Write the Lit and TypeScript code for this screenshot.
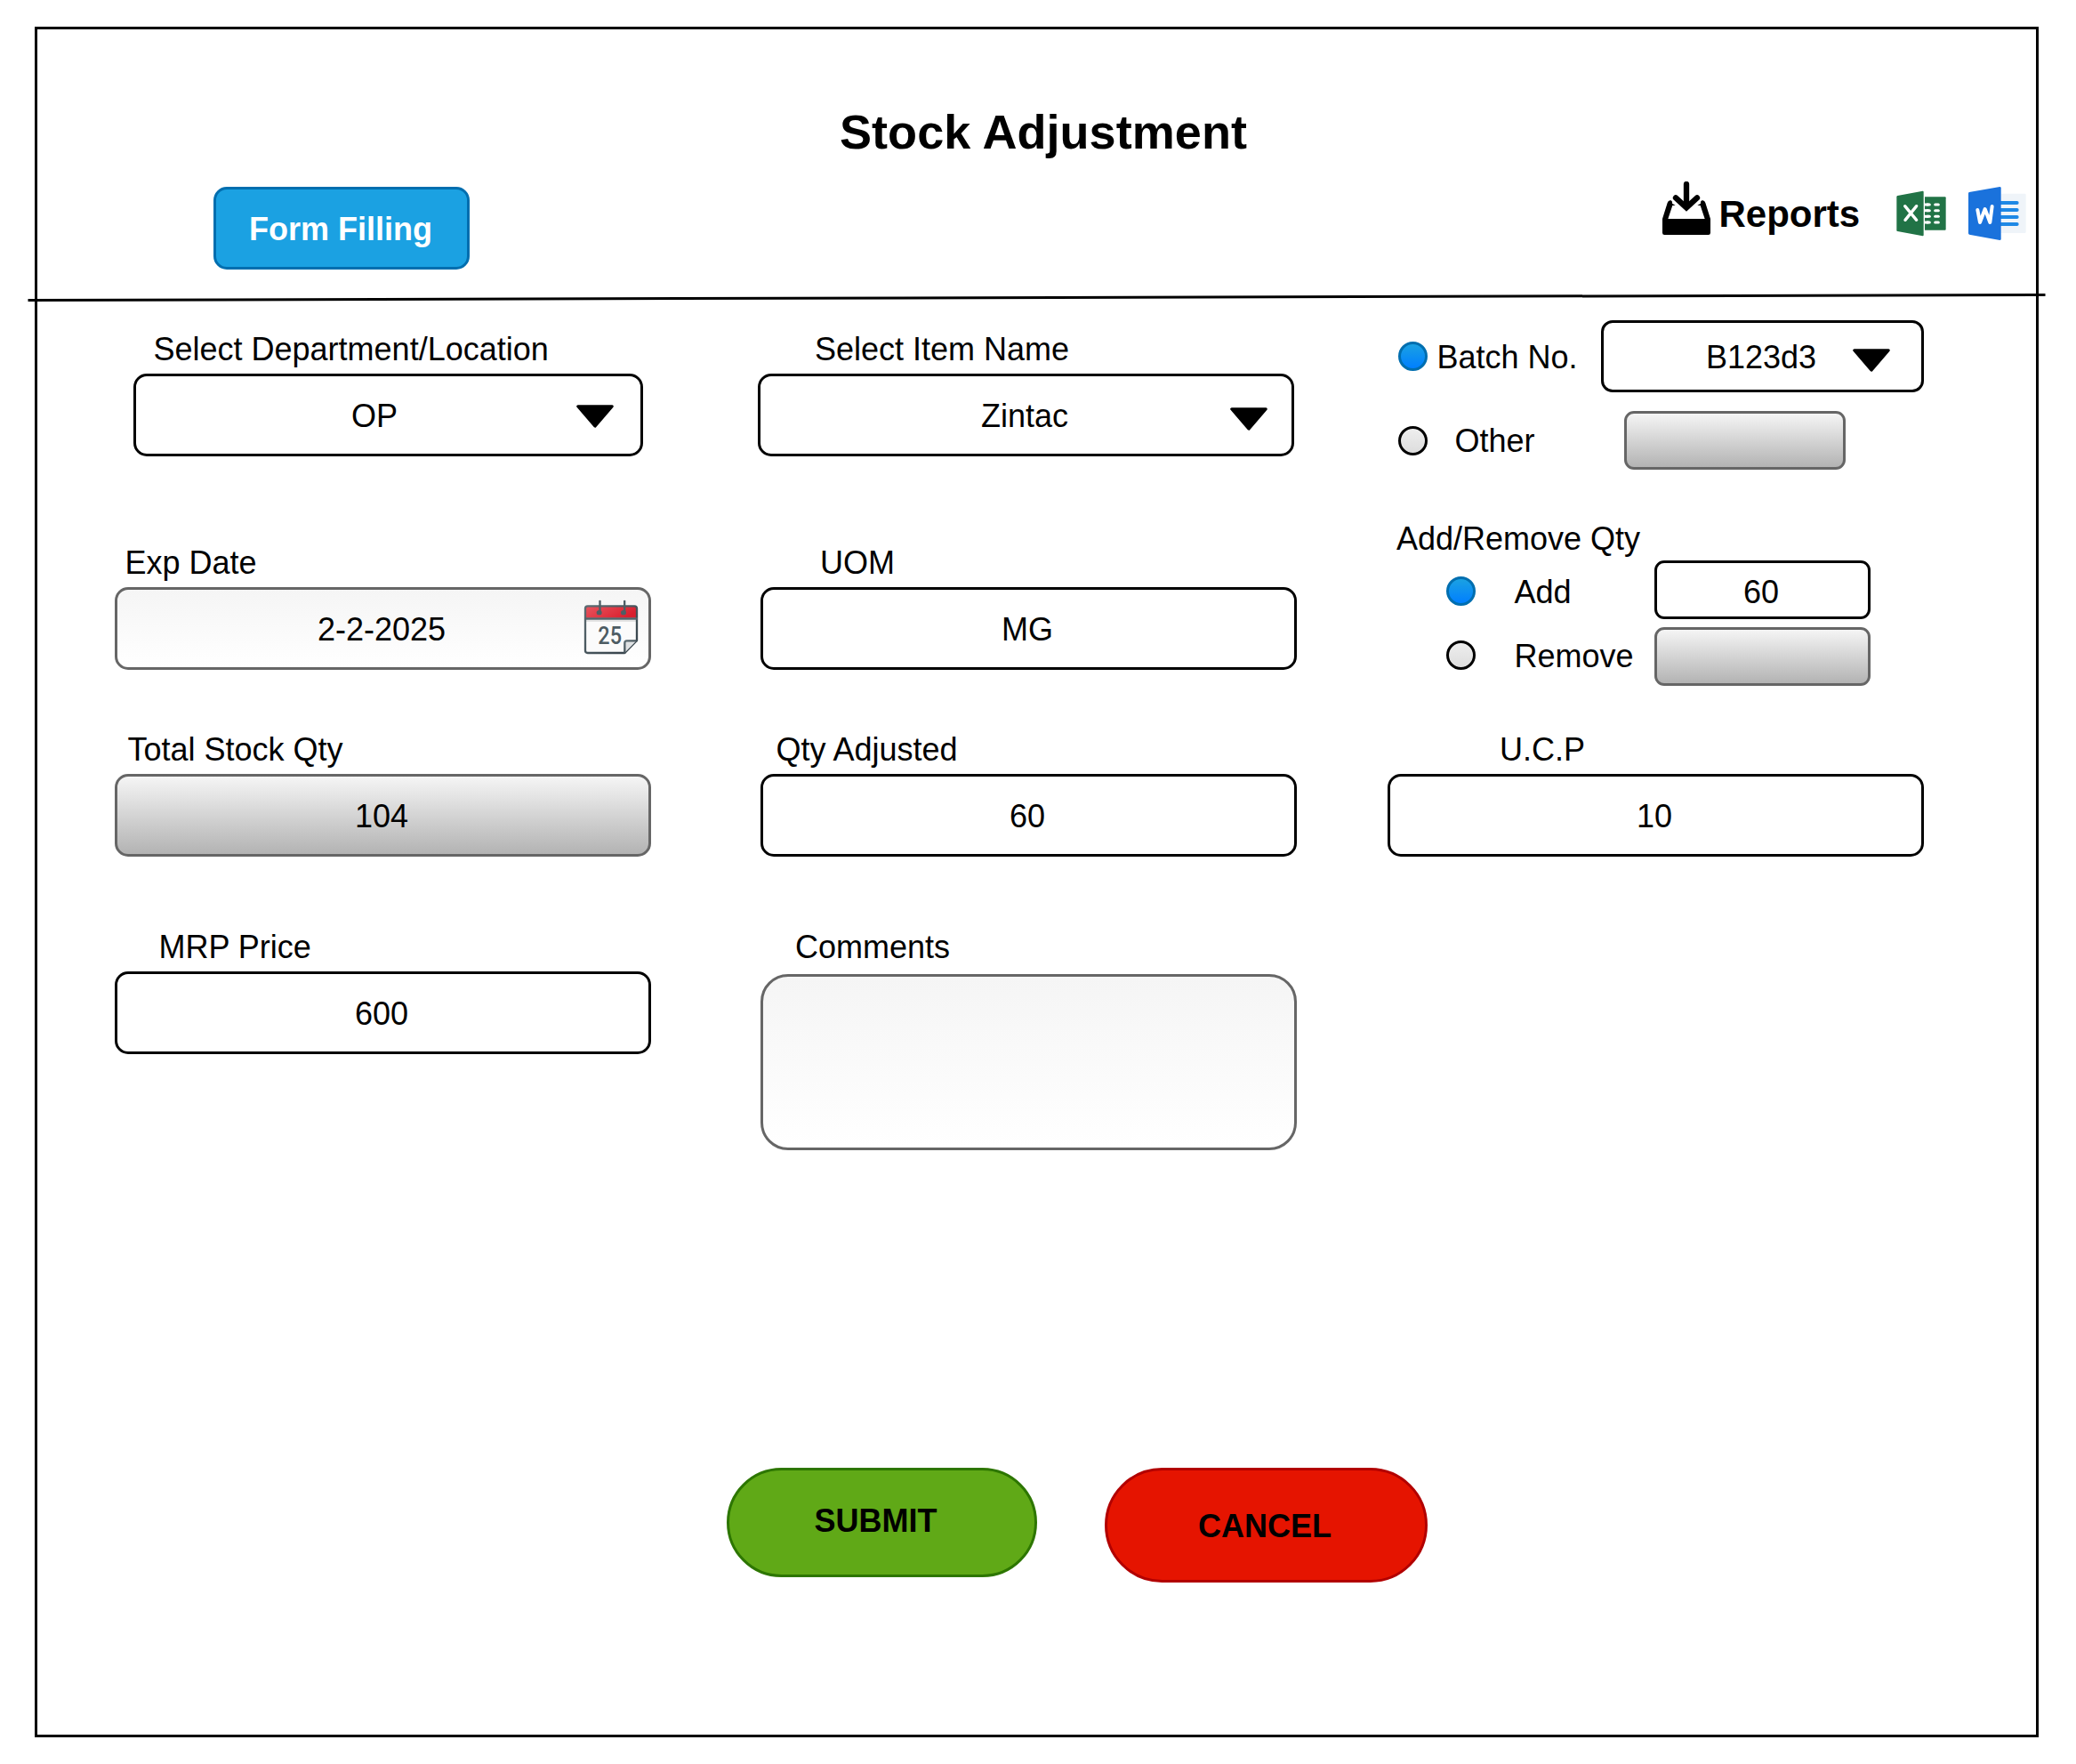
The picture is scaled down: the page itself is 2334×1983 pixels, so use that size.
import { LitElement, html, css, svg, nothing } from "lit";
import { customElement, property } from "lit/decorators.js";

const trayIcon = html`
  <svg class="tray" viewBox="87 72 162 180" width="54" height="60">
    <g fill="none" stroke="#000" stroke-width="19" stroke-linecap="round">
      <path d="M168 81V150" />
      <path d="M132 127L168 160L204 127" stroke-linejoin="miter" />
    </g>
    <path d="M87 198L104 144Q107 134 116 136L120 140V146L131 153H121L106 198H230L215 153H205L216 146V140L220 136Q229 134 232 144L249 198V245Q249 252 242 252H94Q87 252 87 245Z" />
  </svg>
`;

const excelIcon = html`
  <svg class="excel" viewBox="876 102 168 156" width="56" height="52">
    <path fill="#217346" d="M972 124H1040Q1043 124 1043 127V233Q1043 236 1040 236H972Z" />
    <path fill="#217346" d="M880 120L965 104Q968 104 968 107V253Q968 256 965 256L880 240Q877 240 877 237V123Q877 121 880 120Z" />
    <g stroke="#fff" stroke-width="9" fill="none">
      ${[150, 170, 190, 210].map(
        (y) => svg`
          <path d="M972 ${y}H985" /><path d="M980 ${y}H988" stroke-linecap="round" />
          <path d="M1007 ${y}H1018" stroke-linecap="round" />`
      )}
      <path d="M905 155L944 202M944 155L906 202" stroke-width="10" stroke-linecap="round" />
    </g>
  </svg>
`;

const wordIcon = html`
  <svg class="word" viewBox="1119 90 195 180" width="65" height="60">
    <path fill="#eff4f9" d="M1226 113H1309Q1313 113 1313 117V242Q1313 246 1309 246H1226Z" />
    <g stroke="#1e88e5" stroke-width="12" stroke-linecap="round">
      ${[144, 168, 192, 216].map((y) => svg`<path d="M1226 ${y}H1283" />`)}
    </g>
    <path fill="#1a72dc" d="M1122 108L1225 90Q1229 90 1229 94V266Q1229 270 1225 270L1122 251Q1119 250 1119 247V112Q1119 109 1122 108Z" />
    <path fill="none" stroke="#fff" stroke-width="12" stroke-linecap="round" stroke-linejoin="round" d="M1150 168L1158 210L1175 165L1192 210L1199 156" />
  </svg>
`;

const calendarIcon = html`
  <svg class="calendar" viewBox="48 42 186 186" width="62" height="62">
    <defs>
      <linearGradient id="cal-red" x1="0" x2="1" y1="0" y2="0.4">
        <stop offset="0" stop-color="#e8555f" />
        <stop offset="1" stop-color="#d9202f" />
      </linearGradient>
      <linearGradient id="cal-line" x1="0" x2="1" y1="0" y2="1">
        <stop offset="0" stop-color="#5c6c72" />
        <stop offset="1" stop-color="#333f47" />
      </linearGradient>
    </defs>
    <path fill="#fbfbfb" d="M54 64H228V180L187 222H62Q54 222 54 214Z" />
    <path fill="url(#cal-red)" d="M54 72Q54 64 62 64H220Q228 64 228 72V104H54Z" />
    <path fill="#e4e4e4" d="M57 110H225V117H57Z" />
    <g fill="none" stroke="url(#cal-line)" stroke-width="7" stroke-linejoin="round" stroke-linecap="round">
      <path d="M62 64H220Q228 64 228 72V180L187 222H62Q54 222 54 214V72Q54 64 62 64Z" />
      <path d="M187 221V188Q187 181 194 181H227" fill="#dfe2e4" />
    </g>
    <path fill="#53636a" d="M51 103H231V110H51Z" />
    <g fill="#4e5e65">
      <path d="M100 46Q100 44 103.500 44T107 46V82H100Z" />
      <path d="M183 46Q183 44 186.500 44T190 46V82H183Z" />
      <ellipse cx="101" cy="86" rx="9" ry="8" />
      <ellipse cx="183" cy="86" rx="9" ry="8" />
    </g>
    <text x="97" y="192" textLength="80" lengthAdjust="spacingAndGlyphs" class="day">25</text>
  </svg>
`;

const chevron = html`
  <svg class="chevron" viewBox="0 0 42 26" width="42" height="26">
    <path fill="#000" stroke="#000" stroke-width="3" stroke-linejoin="round" d="M1.7 1.8H40.3L21 24.2Z" />
  </svg>
`;

const base = css`
  * {
    box-sizing: border-box;
  }
  svg {
    display: block;
    flex: none;
  }
`;

/** A rounded box that shows a centred value and, if asked, an icon at its right end. */
@customElement("value-box")
class ValueBox extends LitElement {
  @property() value = "";
  @property() icon = "";

  static styles = [
    base,
    css`
      :host {
        box-sizing: border-box;
        display: grid;
        flex: none;
        grid-template-rows: 100%;
        grid-template-columns: 100%;
        align-items: center;
        height: 93px;
        border: 3px solid #000;
        border-radius: 15px;
        background: #fff;
      }
      .value,
      .chevron,
      .calendar {
        grid-area: 1 / 1;
      }
      .value {
        justify-self: center;
        line-height: 41px;
        padding-top: var(--value-top, 2px);
        padding-right: var(--value-right, 3px);
      }
      .chevron {
        justify-self: end;
        align-self: start;
        margin: var(--arrow-top, 32px) var(--arrow-right, 30px) 0 0;
      }
      .calendar {
        justify-self: end;
        align-self: start;
        margin: 11px 11px 0 0;
      }
      .day {
        font: 500 81px Roboto, "Liberation Sans", sans-serif;
        fill: #4d5c63;
      }
    `,
  ];

  render() {
    return html`
      <span class="value">${this.value}</span>
      ${this.icon === "chevron" ? chevron : this.icon === "calendar" ? calendarIcon : nothing}
    `;
  }
}

@customElement("app-root")
class AppRoot extends LitElement {
  static styles = [
    base,
    css`
      :host {
        display: block;
        position: relative;
        width: 2334px;
        height: 1983px;
        padding: 30px 42px 30px 39px;
        box-sizing: border-box;
        background: #fff;
        color: #000;
        font-family: "Liberation Sans", Arial, sans-serif;
        font-size: 36px;
        line-height: 41px;
        white-space: nowrap;
      }
      .frame {
        height: 1923px;
        border: 3px solid #000;
        display: flex;
        flex-direction: column;
      }
      .header {
        height: 327px;
        padding-top: 85px;
      }
      .title {
        margin: 0;
        padding-left: 15px;
        text-align: center;
        font-size: 54px;
        line-height: 61px;
        letter-spacing: 0.06px;
      }
      .toolbar {
        display: flex;
        align-items: flex-start;
        padding: 25px 11px 0 198px;
      }
      .tab {
        width: 288px;
        height: 93px;
        margin-top: 6px;
        padding: 2px 2px 0 0;
        display: flex;
        align-items: center;
        justify-content: center;
        border: 3px solid #006eaf;
        border-radius: 15px;
        background: #1ba1e2;
        color: #fff;
        font-weight: bold;
      }
      .tray {
        margin-left: auto;
      }
      .reports {
        width: 199.5px;
        margin: 13px 0 0 9.5px;
        font-size: 42px;
        line-height: 48px;
        font-weight: bold;
      }
      .excel {
        margin-top: 10px;
      }
      .word {
        margin: 6px 0 0 25px;
      }
      .rule {
        position: absolute;
        left: 0;
        top: 324px;
        pointer-events: none;
      }
      .form {
        height: 1290px;
        display: flex;
        padding-left: 87px;
      }
      .column {
        display: flex;
        flex-direction: column;
        flex: none;
      }
      .first {
        width: 723px;
        padding-top: 12px;
      }
      .second {
        width: 708px;
        padding-top: 12px;
      }
      .third {
        width: 603px;
      }
      .field {
        display: flex;
        flex-direction: column;
        gap: 7px;
        width: 603px;
      }
      .department {
        width: 573px;
        margin-left: 21px;
        --value-right: 31px;
        --arrow-right: 30px;
      }
      .item {
        --arrow-top: 35px;
        --arrow-right: 27px;
      }
      .row2 {
        margin-top: 99px;
      }
      .row3 {
        margin-top: 69px;
      }
      .row4 {
        margin-top: 81px;
      }
      .inset {
        margin-left: 3px;
      }
      .in-department { padding-left: 22.5px; }
      .in-date { padding-left: 11.5px; }
      .in-total { padding-left: 14.5px; }
      .in-mrp { padding-left: 49.5px; }
      .in-item { padding-left: 64px; }
      .in-uom { padding-left: 67px; }
      .in-adjusted { padding-left: 17.5px; }
      .in-comments { padding-left: 39px; }
      .in-ucp { padding-left: 126px; }
      .light {
        border-color: #666;
        background: linear-gradient(#f5f5f5, #fff);
      }
      .disabled {
        border-color: #666;
        background: linear-gradient(#f5f5f5, #b3b3b3);
      }
      .comments {
        height: 198px;
        margin-top: 3px;
        border-radius: 31px;
      }
      .option {
        display: flex;
        align-items: center;
        padding-left: 12px;
      }
      .radio {
        flex: none;
        width: 33px;
        height: 33px;
        border: 3px solid #000;
        border-radius: 50%;
        background: linear-gradient(#eee, #ddd);
      }
      .radio.on {
        border-color: #006eaf;
        background: linear-gradient(#1ba1e2, #007fff);
      }
      .batch-label {
        width: 195px;
        padding: 2px 0 0 10.5px;
      }
      .batch-box {
        width: 363px;
        height: 81px;
        border-radius: 13px;
        --arrow-top: 29px;
        --arrow-right: 35px;
      }
      .other {
        margin-top: 21px;
      }
      .other-label {
        width: 220.5px;
        padding: 1px 0 0 30.5px;
      }
      .small {
        height: 66px;
        border-radius: 11px;
        --value-top: 5px;
      }
      .other-box {
        width: 249px;
      }
      .qty-title {
        margin-top: 57px;
        padding-left: 10px;
      }
      .add,
      .remove {
        padding-left: 66px;
      }
      .add {
        margin-top: 4px;
      }
      .add .radio {
        margin-top: 3px;
      }
      .remove {
        margin-top: 9px;
      }
      .remove .radio {
        margin-bottom: 3px;
      }
      .qty-label {
        width: 201px;
        padding-left: 43.5px;
      }
      .add .qty-label {
        padding-top: 5px;
      }
      .remove .qty-label {
        padding-bottom: 1px;
      }
      .qty-box {
        width: 243px;
      }
      .ucp {
        margin-top: 51px;
      }
      .actions {
        display: flex;
        align-items: flex-start;
        gap: 76px;
        padding-left: 775px;
      }
      .action {
        display: flex;
        align-items: center;
        justify-content: center;
        border: 3px solid;
        font: bold 36px / 41px "Liberation Sans", Arial, sans-serif;
        color: #000;
      }
      .submit {
        width: 349px;
        height: 123px;
        padding: 0 14px 4px 0;
        border-color: #2d7600;
        border-radius: 62px;
        background: #60a917;
      }
      .cancel {
        width: 363px;
        height: 129px;
        padding: 2px 3px 0 0;
        border-color: #b20000;
        border-radius: 65px;
        background: #e51400;
      }
    `,
  ];

  render() {
    return html`
      <div class="frame">
        <header class="header">
          <h1 class="title">Stock Adjustment</h1>
          <div class="toolbar">
            <div class="tab">Form Filling</div>
            ${trayIcon}
            <div class="reports">Reports</div>
            ${excelIcon} ${wordIcon}
          </div>
        </header>

        <main class="form">
          <div class="column first">
            <div class="field department">
              <div class="in-department">Select Department/Location</div>
              <value-box value="OP" icon="chevron"></value-box>
            </div>
            <div class="field row2">
              <div class="in-date">Exp Date</div>
              <value-box class="light" value="2-2-2025" icon="calendar"></value-box>
            </div>
            <div class="field row3">
              <div class="in-total">Total Stock Qty</div>
              <value-box class="disabled" value="104"></value-box>
            </div>
            <div class="field row4">
              <div class="in-mrp">MRP Price</div>
              <value-box value="600"></value-box>
            </div>
          </div>

          <div class="column second">
            <div class="field item">
              <div class="in-item">Select Item Name</div>
              <value-box value="Zintac" icon="chevron"></value-box>
            </div>
            <div class="field inset row2">
              <div class="in-uom">UOM</div>
              <value-box value="MG"></value-box>
            </div>
            <div class="field inset row3">
              <div class="in-adjusted">Qty Adjusted</div>
              <value-box value="60"></value-box>
            </div>
            <div class="field inset row4">
              <div class="in-comments">Comments</div>
              <value-box class="light comments"></value-box>
            </div>
          </div>

          <div class="column third">
            <div class="option">
              <span class="radio on"></span>
              <span class="batch-label">Batch No.</span>
              <value-box class="batch-box" value="B123d3" icon="chevron"></value-box>
            </div>
            <div class="option other">
              <span class="radio"></span>
              <span class="other-label">Other</span>
              <value-box class="small disabled other-box"></value-box>
            </div>
            <div class="qty-title">Add/Remove Qty</div>
            <div class="option add">
              <span class="radio on"></span>
              <span class="qty-label">Add</span>
              <value-box class="small qty-box" value="60"></value-box>
            </div>
            <div class="option remove">
              <span class="radio"></span>
              <span class="qty-label">Remove</span>
              <value-box class="small disabled qty-box"></value-box>
            </div>
            <div class="field ucp">
              <div class="in-ucp">U.C.P</div>
              <value-box value="10"></value-box>
            </div>
          </div>
        </main>

        <footer class="actions">
          <div class="action submit">SUBMIT</div>
          <div class="action cancel">CANCEL</div>
        </footer>
      </div>
      <svg class="rule" width="2334" height="24" viewBox="0 324 2334 24">
        <path d="M31.5 337.5L2299.5 331.5" stroke="#000" stroke-width="3" />
      </svg>
    `;
  }
}
